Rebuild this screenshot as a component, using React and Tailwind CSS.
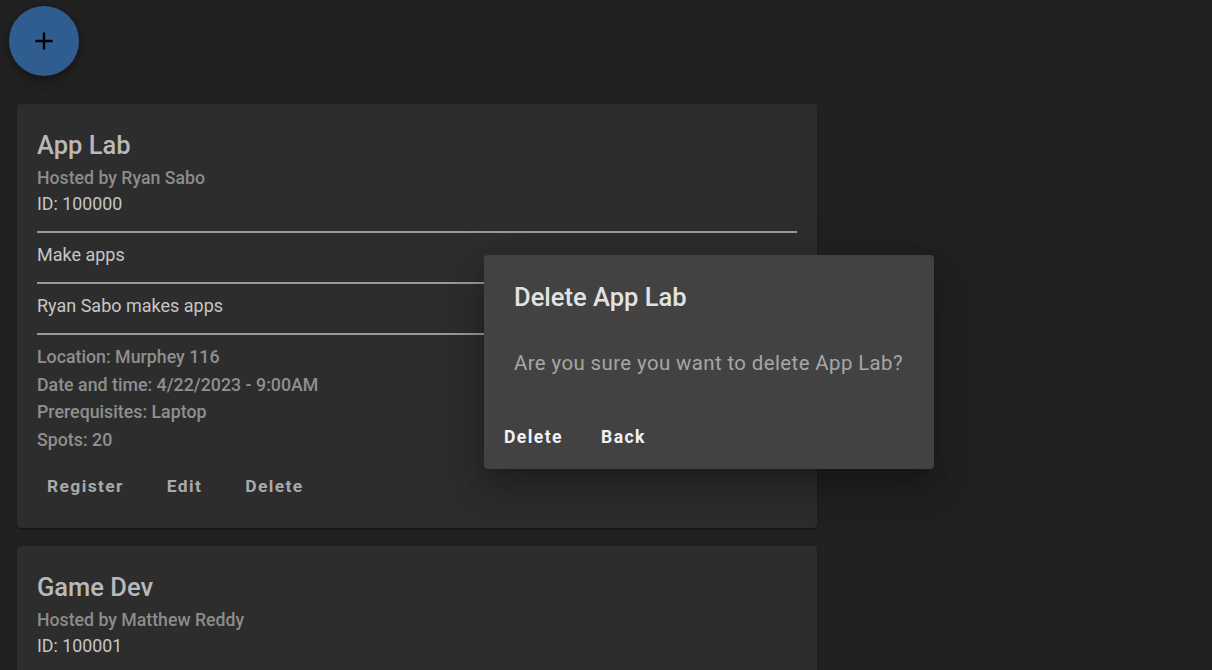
import { Plus } from "lucide-react";

const events = [
  {
    id: "100000",
    title: "App Lab",
    host: "Ryan Sabo",
    summary: "Make apps",
    description: "Ryan Sabo makes apps",
    location: "Murphey 116",
    when: "4/22/2023 - 9:00AM",
    prereqs: "Laptop",
    spots: 20,
  },
  {
    id: "100001",
    title: "Game Dev",
    host: "Matthew Reddy",
    summary: "Make games",
    description: "Matthew Reddy makes games",
    location: "Murphey 118",
    when: "4/23/2023 - 1:00PM",
    prereqs: "Laptop",
    spots: 15,
  },
];

function EventCard({ ev }) {
  return (
    <div className="w-[800px] rounded bg-[#2d2d2d] px-5 pt-[23px] pb-[24px] shadow-[0_2px_1px_-1px_rgba(0,0,0,0.2),0_1px_1px_0_rgba(0,0,0,0.14),0_1px_3px_0_rgba(0,0,0,0.12)]">
      <h2 className="text-[25.5px] leading-[36px] font-medium text-[#b9b9b9]">{ev.title}</h2>
      <p className="mt-[2px] text-[17.7px] leading-[26px] font-medium text-[#8c8c8c]">Hosted by {ev.host}</p>
      <p className="text-[17.8px] leading-[26px] text-[#c6c6c6]">ID: {ev.id}</p>
      <hr className="mt-[14px] border-0 border-t-2 border-[#9a9a9a]" />
      <p className="mt-[9px] text-[18px] leading-[26px] text-[#c6c6c6]">{ev.summary}</p>
      <hr className="mt-[14px] border-0 border-t-2 border-[#9a9a9a]" />
      <p className="mt-[9px] text-[18px] leading-[26px] text-[#c6c6c6]">{ev.description}</p>
      <hr className="mt-[14px] border-0 border-t-2 border-[#9a9a9a]" />
      <div className="mt-[8px] text-[17.8px] leading-[27.7px] font-medium text-[#8f8f8f]">
        <p>Location: {ev.location}</p>
        <p>Date and time: {ev.when}</p>
        <p>Prerequisites: {ev.prereqs}</p>
        <p>Spots: {ev.spots}</p>
      </div>
      <div className="mt-[14px] flex gap-[23px]">
        {["Register", "Edit", "Delete"].map((b) => (
          <button
            key={b}
            className="h-9 px-2.5 text-[17.4px] font-bold tracking-[0.08em] text-[#a9a9a9]"
          >
            {b}
          </button>
        ))}
      </div>
    </div>
  );
}

export default function App() {
  return (
    <div className="relative min-h-screen overflow-hidden bg-[#212121] font-['Roboto',sans-serif]">
      <div className="pl-[9px] pt-[6px]">
        <button className="flex h-[70px] w-[70px] items-center justify-center rounded-full bg-[#305d8f] text-black shadow-[0_3px_5px_-1px_rgba(0,0,0,0.2),0_6px_10px_0_rgba(0,0,0,0.14),0_1px_18px_0_rgba(0,0,0,0.12)]">
          <Plus size={26} strokeWidth={2.2} />
        </button>
      </div>

      <div className="mt-[28px] flex flex-col gap-[18px] pl-[17px]">
        {events.map((ev) => (
          <EventCard key={ev.id} ev={ev} />
        ))}
      </div>

      {/* Delete confirmation dialog */}
      <div className="absolute left-[484px] top-[255px] w-[450px] rounded bg-[#424242] pt-[24px] pb-[14px] shadow-[0_11px_15px_-7px_rgba(0,0,0,0.2),0_24px_38px_3px_rgba(0,0,0,0.14),0_9px_46px_8px_rgba(0,0,0,0.12)]">
        <h3 className="px-[30px] text-[25.5px] leading-[36px] font-medium text-[#e2e2e2]">Delete App Lab</h3>
        <p className="mt-[34px] px-[30px] text-[20.4px] leading-[28px] tracking-[0.02em] text-[#a6a6a6]">
          Are you sure you want to delete App Lab?
        </p>
        <div className="mt-[42px] flex gap-[18px] px-[10px]">
          <button className="h-9 px-2.5 text-[17.6px] font-bold tracking-[0.08em] text-[#f2f2f2]">Delete</button>
          <button className="h-9 px-2.5 text-[17.6px] font-bold tracking-[0.08em] text-[#f2f2f2]">Back</button>
        </div>
      </div>
    </div>
  );
}
